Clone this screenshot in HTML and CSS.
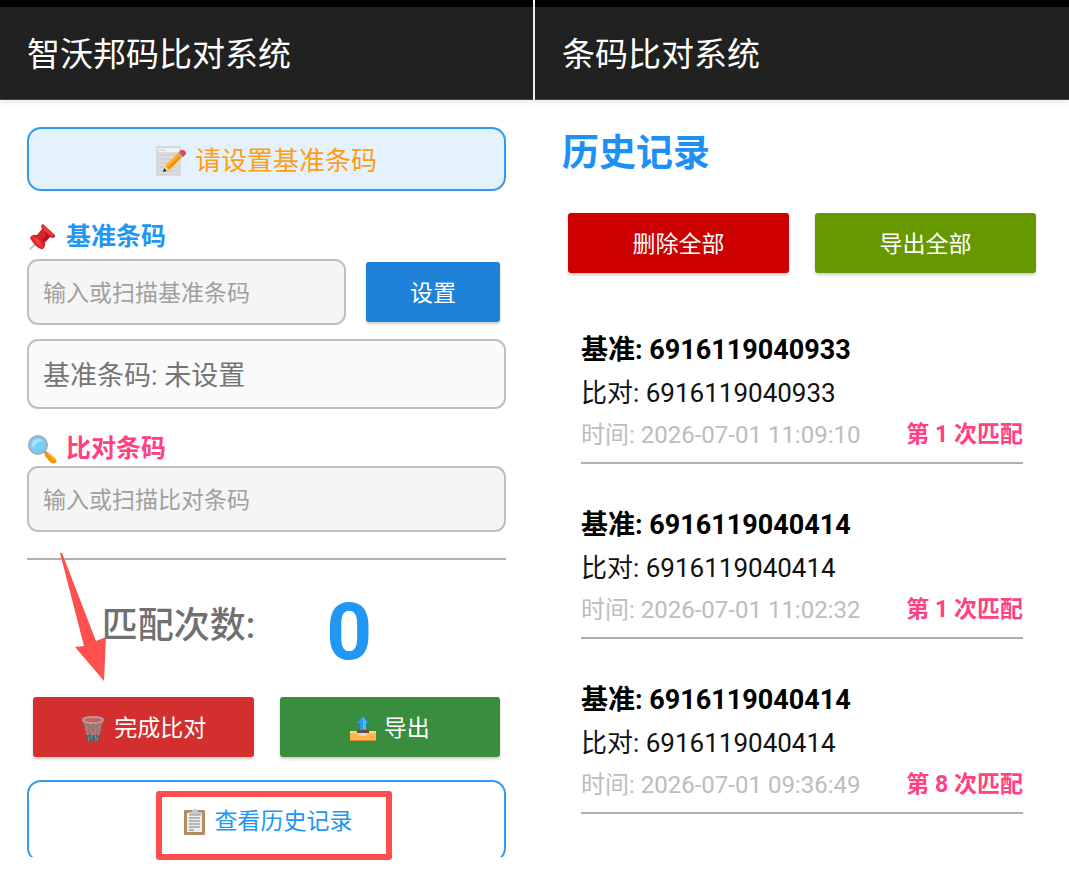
FILE: index.html
```html
<!DOCTYPE html>
<html lang="zh-CN">
<head>
    <meta charset="UTF-8">
    <meta name="viewport" content="width=device-width, initial-scale=1.0">
    <title>条码比对系统</title>
    <link rel="stylesheet" href="styles.css">
</head>
<body>
<main class="screens">
    <section class="screen">
        <header class="app-bar"><h1>智沃邦码比对系统</h1></header>
        <div class="content">
            <div class="status">
                <svg class="icon" viewBox="0 0 30 30" aria-hidden="true">
                    <path d="M1 1h23v28H1z" fill="#dcdcdc" stroke="#c8cacc"/>
                    <path d="M2 2h21v4H2z" fill="#f3f3f3"/>
                    <path d="M3 4h7M3 9h18M3 13h18M3 17h18M3 21h18M3 25h18" stroke="#c6cacd"/>
                    <path d="M9 20 23 6l4 4-14 14z" fill="#ffb30f"/>
                    <path d="m11 22 14-14 2 2-14 14z" fill="#f09300"/>
                    <path d="m9 20-2 6 6-2z" fill="#f5d59b"/>
                    <path d="m8 22-1 4 4-1z" fill="#333"/>
                    <path d="m21 8 2-2 4 4-2 2z" fill="#aab4ba"/>
                    <path d="m23 6 2-2q2-1 4 1t1 3l-3 3z" fill="#e84950"/>
                </svg>
                <span>请设置基准条码</span>
            </div>

            <label class="field-label base" for="baseCode">
                <svg class="icon" viewBox="0 0 30 30" aria-hidden="true">
                    <path d="m2 27 11-12 3 3L3 28z" fill="#c7c9cb"/>
                    <path d="m16 2 12 11q1 3-3 3l-2-1-5 5q1 4-2 7-3 1-7-3t-6-8q2-4 7-3l5-6q-2-4 1-5z" fill="#d8232a"/>
                    <path d="m16 3 11 10q-4 1-8-3t-3-7zM5 14q5 1 8 5t3 7q-4-1-7-5t-4-7z" fill="#ee3c3c"/>
                    <path d="m18 10 5 5-5 5-3-2 4-4z" fill="#a91523"/>
                </svg>
                基准条码
            </label>
            <div class="input-row">
                <input type="text" id="baseCode" placeholder="输入或扫描基准条码">
                <button type="button" class="btn btn-set">设置</button>
            </div>
            <div class="base-value">基准条码: 未设置</div>

            <label class="field-label compare" for="compareCode">
                <svg class="icon" viewBox="0 0 30 30" aria-hidden="true">
                    <path d="m17 17 4 4" stroke="#8c989e" stroke-width="3"/>
                    <path d="m20 18 8 6q3 4 0 5t-5-1l-5-6q-1-3 2-4z" fill="#f59300"/>
                    <path d="m21 19 7 7" stroke="#ffb326" stroke-width="2"/>
                    <circle cx="11" cy="11" r="9" fill="#77cff8" stroke="#a3afb5" stroke-width="2"/>
                    <path d="M5 11q0-5 6-6 4 0 4 2-5 0-9 7z" fill="#b0e5fc"/>
                </svg>
                比对条码
            </label>
            <input type="text" id="compareCode" placeholder="输入或扫描比对条码">
            <hr class="line">

            <div class="count-row">
                <span class="count-label">匹配次数:</span>
                <output class="count">0</output>
                <svg class="arrow" viewBox="0 0 46 128" aria-hidden="true">
                    <path d="M0 0h2L36 88l10-4-2 44L15 94l9-1z" fill="#ff5050"/>
                </svg>
            </div>

            <div class="actions">
                <button type="button" class="btn btn-finish">
                    <svg class="icon-small" viewBox="0 0 26 28" aria-hidden="true">
                        <path d="m3 5 4 20q6 3 12 0l4-20z" fill="#a66464"/>
                        <path d="m6 20 1 5q6 3 12 0l1-5z" fill="#465e64"/>
                        <path d="m4 8 14 17M9 8l11 12M15 8l6 7M22 8 8 25M17 8 6 20M11 8l-6 7M6 9l3 17M11 9l1 17M16 9l-1 17M20 9l-3 17" fill="none" stroke="#98999a" stroke-width=".7"/>
                        <ellipse cx="13" cy="5" rx="10" ry="3" fill="#e15551" stroke="#a6a2a0" stroke-width="2"/>
                    </svg>
                    完成比对
                </button>
                <button type="button" class="btn btn-export">
                    <svg class="icon-small" viewBox="0 0 26 28" aria-hidden="true">
                        <path d="M0 16h26v10H0z" fill="#ffb64b"/>
                        <path d="M0 16h26v2H0z" fill="#ffd17b"/>
                        <path d="M0 25h26v1H0z" fill="#da8928"/>
                        <path d="M7 16h12q0 5-6 5t-6-5z" fill="#d9d9d9"/>
                        <path d="M7 15h12v3H7z" fill="#684e40"/>
                        <path d="m13 1 6 7h-3v7h-6V8H7z" fill="#299cf3"/>
                        <path d="m13 2 3 4v8h-3z" fill="#54b8fa"/>
                    </svg>
                    导出
                </button>
            </div>

            <div class="history-wrap">
                <div class="history-clip">
                    <a class="history-link" href="#history">
                        <svg class="icon-small" viewBox="0 0 26 28" aria-hidden="true">
                            <rect x="3" y="2" width="21" height="25" rx="1" fill="#b58c62"/>
                            <path d="M6 5h15v19H6z" fill="#eee"/>
                            <path d="M8 10h11M8 13h11M8 16h11M8 19h11M8 22h5" stroke="#b4b6b8" stroke-width="2"/>
                            <path d="M8 4h3q0-3 3-3t3 3h3v3H8z" fill="#c9cbcb"/>
                            <path d="M8 7h12" stroke="#919596"/>
                        </svg>
                        查看历史记录
                    </a>
                </div>
                <div class="highlight"></div>
            </div>
        </div>
    </section>

    <section class="screen" id="history">
        <header class="app-bar"><h1>条码比对系统</h1></header>
        <div class="content">
            <h2>历史记录</h2>
            <div class="actions">
                <button type="button" class="btn btn-delete-all">删除全部</button>
                <button type="button" class="btn btn-export-all">导出全部</button>
            </div>
            <ul class="records">
                <li class="record">
                    <div class="record-base">基准: 6916119040933</div>
                    <div class="record-compare">比对: 6916119040933</div>
                    <div class="record-meta"><span>时间: 2026-07-01 11:09:10</span><strong>第 1 次匹配</strong></div>
                </li>
                <li class="record">
                    <div class="record-base">基准: 6916119040414</div>
                    <div class="record-compare">比对: 6916119040414</div>
                    <div class="record-meta"><span>时间: 2026-07-01 11:02:32</span><strong>第 1 次匹配</strong></div>
                </li>
                <li class="record">
                    <div class="record-base">基准: 6916119040414</div>
                    <div class="record-compare">比对: 6916119040414</div>
                    <div class="record-meta"><span>时间: 2026-07-01 09:36:49</span><strong>第 8 次匹配</strong></div>
                </li>
            </ul>
        </div>
    </section>
</main>
</body>
</html>
```
FILE: styles.css
```css
* {
    box-sizing: border-box;
}

body {
    margin: 0;
    background-color: #fff;
    color: #111;
    font-family: Roboto, "Noto Sans CJK SC", sans-serif;
    font-size: 26px;
    line-height: 40px;
}

.screens {
    display: grid;
    grid-template-columns: 533fr 534fr;
    gap: 2px;
    min-height: 100vh;
}

.screen {
    min-width: 0;
}

.app-bar {
    display: flex;
    align-items: center;
    height: 100px;
    padding: 0 27px;
    border-top: 7px solid #000;
    border-bottom: 1px solid #444;
    background-color: #212121;
    box-shadow: 0 2px 6px rgba(0, 0, 0, 0.1);
    color: #fff;
}

.app-bar h1 {
    margin: 0;
    padding-top: 3px;
    font-size: 33px;
    font-weight: 400;
}

.content {
    padding: 27px 27px 10px;
}

.icon {
    width: 30px;
    height: 30px;
    flex: none;
}

.icon-small {
    width: 26px;
    height: 28px;
    flex: none;
}

.status {
    display: flex;
    align-items: center;
    justify-content: center;
    gap: 9px;
    height: 64px;
    padding-top: 3px;
    border: 2px solid #2f9bf4;
    border-radius: 14px;
    background-color: #e3f2fd;
    color: #ff9d13;
}

.field-label {
    display: flex;
    align-items: center;
    gap: 9px;
    font-size: 25px;
    font-weight: 700;
}

.base {
    margin-top: 26px;
    margin-bottom: 2px;
    color: #2196f3;
}

.compare {
    margin-top: 20px;
    margin-bottom: -3px;
    color: #ff4081;
}

.input-row {
    display: flex;
    align-items: center;
    gap: 20px;
    padding-right: 6px;
}

input {
    display: block;
    width: 100%;
    min-width: 0;
    height: 66px;
    padding: 3px 14px 0;
    border: 2px solid #bfbfbf;
    border-radius: 11px;
    background-color: #f5f5f5;
    color: #333;
    font: inherit;
    font-size: 23px;
}

input::placeholder {
    color: #a0a0a0;
    opacity: 1;
}

.base-value {
    height: 70px;
    margin-top: 14px;
    padding: 15px 14px;
    border: 2px solid #bfbfbf;
    border-radius: 11px;
    background-color: #fafafa;
    color: #757575;
    font-size: 27px;
}

.btn {
    display: flex;
    align-items: center;
    justify-content: center;
    gap: 8px;
    height: 60px;
    padding: 3px 0 0;
    border: none;
    border-radius: 3px;
    box-shadow: 0 2px 3px rgba(0, 0, 0, 0.2);
    color: #fff;
    font: inherit;
    font-size: 23px;
    cursor: pointer;
}

.btn-set {
    flex: 0 0 134px;
    background-color: #1e82d8;
}

.btn-finish {
    background-color: #d32f2f;
}

.btn-export {
    background-color: #388e3c;
}

.btn-delete-all {
    background-color: #cc0000;
}

.btn-export-all {
    background-color: #669900;
}

.line {
    height: 2px;
    margin: 26px 0 0;
    border: none;
    background-color: #b0b0b0;
}

.count-row {
    position: relative;
    display: flex;
    align-items: center;
    justify-content: center;
    gap: 12px;
    height: 137px;
}

.count-label {
    padding-bottom: 6px;
    color: #707070;
    font-size: 36px;
    font-weight: 500;
}

.count {
    width: 164px;
    padding-top: 6px;
    color: #2196f3;
    font-size: 80px;
    font-weight: 700;
    text-align: center;
}

/* pointer over the counter, aimed at the finish button */
.arrow {
    position: absolute;
    top: -7px;
    left: 33px;
    width: 46px;
    height: 128px;
}

.actions {
    display: grid;
    grid-template-columns: 1fr 1fr;
    gap: 26px;
    padding: 0 6px;
}

.history-wrap {
    position: relative;
    margin-top: 23px;
}

.history-clip {
    height: 77px;
    overflow: hidden;
}

.history-link {
    display: flex;
    align-items: center;
    justify-content: center;
    gap: 8px;
    height: 82px;
    padding-top: 2px;
    border: 2px solid #2f9bf4;
    border-radius: 14px;
    color: #2196f3;
    font-size: 23px;
    text-decoration: none;
}

.highlight {
    position: absolute;
    top: 11px;
    left: 27%;
    width: 236px;
    height: 69px;
    border: 6px solid #ff4d4d;
    border-radius: 3px;
    pointer-events: none;
}

h2 {
    margin: 0 0 34px;
    padding-top: 2px;
    color: #1e90f5;
    font-size: 37px;
    font-weight: 700;
    line-height: 50px;
}

.records {
    margin: 53px 0 0;
    padding: 0 19px;
    list-style: none;
}

.record {
    height: 138px;
    margin-bottom: 37px;
    border-bottom: 2px solid #b0b0b0;
}

.record:last-child {
    margin-bottom: 0;
}

.record-base {
    padding-top: 2px;
    color: #000;
    font-size: 27px;
    font-weight: 700;
    line-height: 44px;
}

.record-compare {
    line-height: 43px;
}

.record-meta {
    display: flex;
    justify-content: space-between;
    color: #bdbdbd;
    font-size: 24px;
    white-space: nowrap;
}

.record-meta strong {
    color: #ff4081;
    font-size: 23px;
    font-weight: 700;
}

@media (max-width: 800px) {
    .screens {
        grid-template-columns: 1fr;
    }
}
```
